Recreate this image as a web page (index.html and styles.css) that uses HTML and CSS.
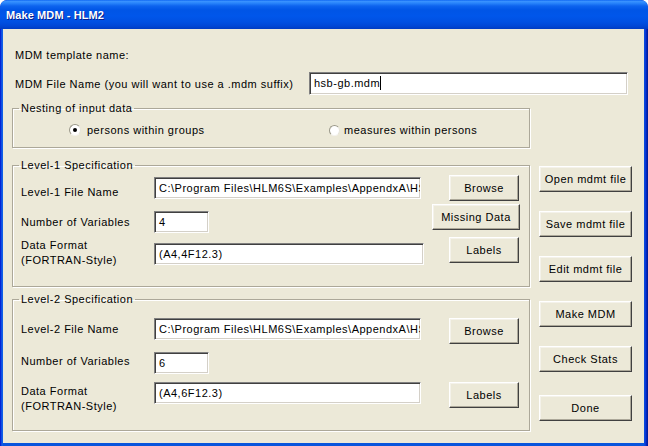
FILE: index.html
```html
<!DOCTYPE html>
<html>
<head>
<meta charset="utf-8">
<title>Make MDM - HLM2</title>
<link rel="stylesheet" href="styles.css">
</head>
<body>
<div class="window">
  <div class="titlebar"><span class="title">Make MDM - HLM2</span></div>
  <div class="frame">
    <div class="client">
      <div class="tmpl">MDM template name:</div>
      <div class="filename">
        <span class="fn-label">MDM File Name (you will want to use a .mdm suffix)</span>
        <div class="input fn-input">hsb-gb.mdm<span class="caret"></span></div>
      </div>
      <fieldset class="group nesting">
        <legend>Nesting of input data</legend>
        <div class="radios">
          <div class="radio"><span class="dot on"></span><span>persons within groups</span></div>
          <div class="radio r2"><span class="dot"></span><span>measures within persons</span></div>
        </div>
      </fieldset>
      <div class="main">
        <div class="groups">
          <fieldset class="group spec l1">
            <legend>Level-1 Specification</legend>
            <div class="grid">
              <div class="lbl a1">Level-1 File Name</div>
              <div class="input path a1i">C:\Program Files\HLM6S\Examples\AppendxA\HSB1.DAT</div>
              <button class="btn small a1b">Browse</button>
              <div class="lbl a2">Number of Variables</div>
              <div class="input num a2i">4</div>
              <button class="btn missing">Missing Data</button>
              <div class="lbl two a3">Data Format<br>(FORTRAN-Style)</div>
              <div class="input fmt a3i">(A4,4F12.3)</div>
              <button class="btn small">Labels</button>
            </div>
          </fieldset>
          <fieldset class="group spec l2">
            <legend>Level-2 Specification</legend>
            <div class="grid">
              <div class="lbl b1">Level-2 File Name</div>
              <div class="input path">C:\Program Files\HLM6S\Examples\AppendxA\HSB2.DAT</div>
              <button class="btn small">Browse</button>
              <div class="lbl b2">Number of Variables</div>
              <div class="input num">6</div>
              <div class="empty"></div>
              <div class="lbl two b3">Data Format<br>(FORTRAN-Style)</div>
              <div class="input path">(A4,6F12.3)</div>
              <button class="btn small">Labels</button>
            </div>
          </fieldset>
        </div>
        <div class="side">
          <button class="btn side-btn">Open mdmt file</button>
          <button class="btn side-btn">Save mdmt file</button>
          <button class="btn side-btn">Edit mdmt file</button>
          <button class="btn side-btn">Make MDM</button>
          <button class="btn side-btn">Check Stats</button>
          <button class="btn side-btn done">Done</button>
        </div>
      </div>
    </div>
  </div>
</div>
</body>
</html>
```

FILE: styles.css
```css
* { box-sizing: border-box; }
html, body { margin: 0; padding: 0; }
body {
  width: 648px;
  height: 446px;
  overflow: hidden;
  background: #ffffff;
  font-family: "Liberation Sans", Arial, sans-serif;
  font-size: 11px;
  letter-spacing: 0.5px;
  color: #000;
}
.window {
  width: 648px;
  height: 446px;
  display: flex;
  flex-direction: column;
  border-radius: 7px 7px 0 0;
  overflow: hidden;
  background: #0a3fd6;
}
.titlebar {
  height: 29px;
  flex: none;
  display: flex;
  align-items: center;
  padding: 1px 0 0 6px;
  background: linear-gradient(to bottom, #0058ee 0, #3d95ff 1px, #2a86fb 3px, #0d63ee 6px, #0055e6 10px, #0056ea 16px, #0050e2 22px, #0047d6 26px, #003cc2 29px);
  border-radius: 7px 7px 0 0;
}
.title {
  color: #fff;
  font-family: "Liberation Sans", Arial, sans-serif;
  font-weight: bold;
  font-size: 11px;
  letter-spacing: 0.1px;
  text-shadow: 1px 1px 0 #0a1e8c;
}
.frame {
  flex: 1;
  display: flex;
  padding: 0 4px 3px 3px;
  background: linear-gradient(to right, #0019cf 0, #0831d9 1px, #166aee 2px, #0855dd 3px, #0855dd 644px, #0a3fd8 645px, #0831d9 646px, #001ea0 647px);
}
.client {
  flex: 1;
  background: #ece9d8;
  padding: 0 0 0 9px;
}
.tmpl {
  margin: 19px 0 0 3px;
  line-height: 14px;
}
.filename {
  display: flex;
  margin-top: 10px;
  height: 23px;
}
.fn-label {
  width: 297px;
  padding: 5px 0 0 3px;
  line-height: 14px;
}
.input {
  height: 22px;
  background: #fff;
  border-top: 1px solid #808080;
  border-left: 1px solid #808080;
  border-right: 1px solid #ffffff;
  border-bottom: 1px solid #ffffff;
  box-shadow: inset 1px 1px 0 #404040, inset -1px -1px 0 #d4d0c8;
  padding: 0 0 0 4px;
  line-height: 20px;
  white-space: nowrap;
  overflow: hidden;
}
.fn-input {
  width: 319px;
  height: 23px;
  line-height: 21px;
}
.caret {
  display: inline-block;
  width: 1px;
  height: 14px;
  background: #000;
  vertical-align: -3px;
}
.group {
  margin: 0;
  width: 518px;
  border: 1px solid #aca899;
  box-shadow: inset 1px 1px 0 #fff, 1px 1px 0 #fff;
  min-width: 0;
}
.group legend {
  margin-left: 6px;
  padding: 0 2px;
  line-height: 14px;
}
.spec legend { margin-left: -2px; }
.nesting {
  margin-top: 6px;
  padding: 8px 0 10px 0;
}
.radios {
  display: grid;
  grid-template-columns: 260px auto;
  line-height: 14px;
  padding-left: 56px;
}
.radio {
  display: flex;
  align-items: center;
}
.dot {
  width: 12px;
  height: 12px;
  border-radius: 50%;
  background: #fff;
  border: 1px solid;
  border-color: #9a9889 #e6e4da #f4f3ee #9a9889;
  margin-right: 6px;
  position: relative;
  flex: none;
}
.r2 .dot { margin-right: 4px; width: 11px; height: 11px; }
.dot.on::after {
  content: "";
  position: absolute;
  left: 3px;
  top: 3px;
  width: 4px;
  height: 4px;
  border-radius: 50%;
  background: #000;
}
.main {
  display: flex;
  margin-top: 10px;
}
.spec {
  padding: 0 0 0 8px;
}
.l1 { padding-top: 3px; padding-bottom: 18px; }
.l2 { margin-top: 5px; padding-top: 12px; padding-bottom: 16px; }
.grid {
  display: grid;
  grid-template-columns: 133px 278px 88px;
  align-items: start;
}
.l1 .grid { grid-template-rows: 29px 33px auto; }
.l2 .grid { grid-template-rows: 34px 30px auto; }
.lbl { line-height: 14px; white-space: nowrap; }
.lbl.two { line-height: 15px; }
.a1 { margin-top: 10px; }
.a1i { margin-top: 2px; }
.a2 { margin-top: 11px; }
.a2i { margin-top: 7px; }
.a3 { margin-top: 1px; }
.a3i { margin-top: 6px; }
.b1 { margin-top: 4px; }
.b2 { margin-top: 2px; }
.b3 { margin-top: 2px; line-height: 13px; }
.path { width: 267px; }
.fmt { width: 270px; }
.num { width: 55px; }
.btn {
  font-family: "Liberation Sans", Arial, sans-serif;
  font-size: 11px;
  letter-spacing: 0.5px;
  color: #000;
  height: 26px;
  background: #ece9d8;
  border-top: 1px solid #ffffff;
  border-left: 1px solid #ffffff;
  border-right: 1px solid #404040;
  border-bottom: 1px solid #404040;
  box-shadow: inset -1px -1px 0 #aca899, inset 1px 1px 0 #f4f2ea;
  padding: 0;
  margin: 0;
  line-height: 20px;
}
.small { width: 70px; justify-self: end; margin-right: 1px; }
.missing { width: 88px; }
.side {
  display: flex;
  flex-direction: column;
  gap: 19px;
  margin-left: 9px;
  padding-top: 8px;
}
.side-btn { width: 93px; }
.done { margin-top: 4px; }
```
